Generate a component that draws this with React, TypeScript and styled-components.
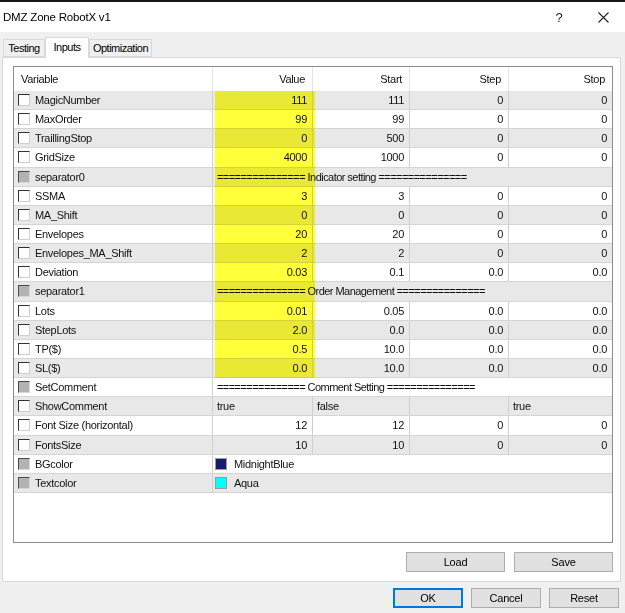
import React from "react";
import styled, { createGlobalStyle } from "styled-components";

const GlobalStyle = createGlobalStyle`
  html, body { margin: 0; padding: 0; background: #f0f0f0; }
  body { font-family: "Liberation Sans", Arial, sans-serif; }
  * { box-sizing: border-box; }
`;

const ROW_H = 19.15;
const COLS = "199px 100px 97px 99px 1fr";

type Param =
  | { kind: "num"; name: string; value: string; start: string; step: string; stop: string }
  | { kind: "sep"; name: string; text: string }
  | { kind: "bool"; name: string; value: string; start: string; step: string; stop: string }
  | { kind: "color"; name: string; color: string; label: string };

const params: Param[] = [
  { kind: "num", name: "MagicNumber", value: "111", start: "111", step: "0", stop: "0" },
  { kind: "num", name: "MaxOrder", value: "99", start: "99", step: "0", stop: "0" },
  { kind: "num", name: "TraillingStop", value: "0", start: "500", step: "0", stop: "0" },
  { kind: "num", name: "GridSize", value: "4000", start: "1000", step: "0", stop: "0" },
  { kind: "sep", name: "separator0", text: "=============== Indicator setting ===============" },
  { kind: "num", name: "SSMA", value: "3", start: "3", step: "0", stop: "0" },
  { kind: "num", name: "MA_Shift", value: "0", start: "0", step: "0", stop: "0" },
  { kind: "num", name: "Envelopes", value: "20", start: "20", step: "0", stop: "0" },
  { kind: "num", name: "Envelopes_MA_Shift", value: "2", start: "2", step: "0", stop: "0" },
  { kind: "num", name: "Deviation", value: "0.03", start: "0.1", step: "0.0", stop: "0.0" },
  { kind: "sep", name: "separator1", text: "=============== Order Management ===============" },
  { kind: "num", name: "Lots", value: "0.01", start: "0.05", step: "0.0", stop: "0.0" },
  { kind: "num", name: "StepLots", value: "2.0", start: "0.0", step: "0.0", stop: "0.0" },
  { kind: "num", name: "TP($)", value: "0.5", start: "10.0", step: "0.0", stop: "0.0" },
  { kind: "num", name: "SL($)", value: "0.0", start: "10.0", step: "0.0", stop: "0.0" },
  { kind: "sep", name: "SetComment", text: "=============== Comment Setting ===============" },
  { kind: "bool", name: "ShowComment", value: "true", start: "false", step: "", stop: "true" },
  { kind: "num", name: "Font Size (horizontal)", value: "12", start: "12", step: "0", stop: "0" },
  { kind: "num", name: "FontsSize", value: "10", start: "10", step: "0", stop: "0" },
  { kind: "color", name: "BGcolor", color: "#191970", label: "MidnightBlue" },
  { kind: "color", name: "Textcolor", color: "#00ffff", label: "Aqua" },
];

const Window = styled.div`
  width: 625px;
  height: 613px;
  display: flex;
  flex-direction: column;
  background: #f0f0f0;
  font-size: 11px;
  letter-spacing: -0.3px;
  color: #111;
  overflow: hidden;
`;

const DesktopEdge = styled.div`
  height: 2px;
  background: #161616;
  flex: none;
`;

const TitleBar = styled.div`
  height: 30px;
  flex: none;
  background: #ffffff;
  display: flex;
  align-items: center;
  padding-left: 3px;
`;

const Title = styled.div`
  flex: 1;
  font-size: 11.5px;
  letter-spacing: -0.2px;
  color: #000;
`;

const HelpGlyph = styled.div`
  width: 44px;
  text-align: center;
  font-size: 13px;
  color: #222;
`;

const CloseButton = styled.div`
  width: 44px;
  display: flex;
  justify-content: center;
  align-items: center;
`;

const TabStrip = styled.div`
  flex: none;
  display: flex;
  align-items: flex-end;
  padding: 5px 0 0 3px;
  height: 25px;
`;

const Tab = styled.div<{ $active?: boolean; $w: number }>`
  width: ${(p) => p.$w}px;
  height: ${(p) => (p.$active ? 21 : 18)}px;
  margin-bottom: ${(p) => (p.$active ? -1 : 0)}px;
  background: ${(p) => (p.$active ? "#ffffff" : "#f0f0f0")};
  border: 1px solid #d9d9d9;
  border-bottom: ${(p) => (p.$active ? "none" : "1px solid #d9d9d9")};
  display: flex;
  align-items: center;
  justify-content: center;
  padding-bottom: ${(p) => (p.$active ? 3 : 0)}px;
  position: relative;
  z-index: ${(p) => (p.$active ? 2 : 1)};
  letter-spacing: -0.5px;
  white-space: nowrap;
  color: #000;
`;

const Panel = styled.div`
  height: 525px;
  flex: none;
  margin: 0 4px 0 2px;
  background: #ffffff;
  border: 1px solid #d9d9d9;
  padding: 8px 7px 9px 10px;
  display: flex;
  flex-direction: column;
`;

const Table = styled.div`
  height: 477px;
  border: 1px solid #8c8c8c;
  background: #ffffff;
  display: flex;
  flex-direction: column;
`;

const HeaderRow = styled.div`
  display: grid;
  grid-template-columns: ${COLS};
  height: 24px;
  flex: none;
`;

const HeaderCell = styled.div<{ $left?: boolean }>`
  display: flex;
  align-items: center;
  justify-content: ${(p) => (p.$left ? "flex-start" : "flex-end")};
  padding: 0 7px 1px 7px;
  border-right: 1px solid #e5e5e5;
  color: #111;
  &:last-child { border-right: none; }
`;

const Body = styled.div`
  position: relative;
  flex: 1;
`;

const Row = styled.div<{ $alt: boolean }>`
  display: grid;
  grid-template-columns: ${COLS};
  height: ${ROW_H}px;
  background: ${(p) => (p.$alt ? "#e8e8e8" : "#ffffff")};
  border-bottom: 1px solid #d5d5d5;
`;

const NameCell = styled.div`
  display: flex;
  align-items: center;
  gap: 5px;
  padding-left: 4px;
  border-right: 1px solid #d0d0d0;
  white-space: nowrap;
`;

const Check = styled.span<{ $disabled?: boolean }>`
  width: 12px;
  height: 12px;
  flex: none;
  border: 1px solid;
  border-color: ${(p) =>
    p.$disabled ? "#4a4a4a #d8d8d8 #d8d8d8 #4a4a4a" : "#333333 #cfcfcf #cfcfcf #333333"};
  background: ${(p) => (p.$disabled ? "#b3b3b3" : "#ffffff")};
`;

const Cell = styled.div<{ $left?: boolean; $span?: number }>`
  display: flex;
  align-items: center;
  justify-content: ${(p) => (p.$left ? "flex-start" : "flex-end")};
  padding: 0 5px 0 ${(p) => (p.$left ? 4 : 5)}px;
  border-right: 1px solid #d0d0d0;
  white-space: nowrap;
  overflow: hidden;
  grid-column: ${(p) => (p.$span ? `span ${p.$span}` : "auto")};
  &:last-child { border-right: none; }
`;

const SeparatorCell = styled(Cell)`
  letter-spacing: -0.55px;
`;

const ColorCell = styled(Cell)`
  gap: 7px;
  padding-left: 2px;
`;

const Swatch = styled.span<{ $color: string }>`
  width: 12px;
  height: 12px;
  flex: none;
  background: ${(p) => p.$color};
  border: 1px solid #9a9a9a;
`;

const Highlight = styled.div`
  position: absolute;
  left: 201px;
  top: 0;
  width: 100px;
  background: #ffff3a;
  mix-blend-mode: multiply;
  pointer-events: none;
`;

const PanelButtons = styled.div`
  display: flex;
  justify-content: flex-end;
  gap: 9px;
  margin-top: 9px;
`;

const Button = styled.button<{ $w: number; $default?: boolean }>`
  width: ${(p) => p.$w}px;
  height: 20px;
  padding: 0;
  background: #e1e1e1;
  border: 1px solid ${(p) => (p.$default ? "#0078d7" : "#adadad")};
  box-shadow: ${(p) => (p.$default ? "inset 0 0 0 1px #0078d7" : "none")};
  font-family: "Liberation Sans", Arial, sans-serif;
  font-size: 11px;
  letter-spacing: -0.2px;
  color: #000;
`;

const DialogButtons = styled.div`
  display: flex;
  justify-content: flex-end;
  gap: 8px;
  padding: 6px 6px 0 0;
`;

function CloseIcon() {
  return (
    <svg width="11" height="11" viewBox="0 0 11 11">
      <path d="M0.5 0.5 L10.5 10.5 M10.5 0.5 L0.5 10.5" stroke="#222" strokeWidth="1.1" fill="none" />
    </svg>
  );
}

function ParamRow({ p, alt }: { p: Param; alt: boolean }) {
  const disabled = p.kind === "sep" || p.kind === "color";
  return (
    <Row $alt={alt}>
      <NameCell>
        <Check $disabled={disabled} />
        {p.name}
      </NameCell>
      {p.kind === "num" && (
        <>
          <Cell>{p.value}</Cell>
          <Cell>{p.start}</Cell>
          <Cell>{p.step}</Cell>
          <Cell>{p.stop}</Cell>
        </>
      )}
      {p.kind === "bool" && (
        <>
          <Cell $left>{p.value}</Cell>
          <Cell $left>{p.start}</Cell>
          <Cell $left>{p.step}</Cell>
          <Cell $left>{p.stop}</Cell>
        </>
      )}
      {p.kind === "sep" && (
        <SeparatorCell $left $span={4}>
          {p.text}
        </SeparatorCell>
      )}
      {p.kind === "color" && (
        <ColorCell $left $span={4}>
          <Swatch $color={p.color} />
          {p.label}
        </ColorCell>
      )}
    </Row>
  );
}

export default function App() {
  const highlightRows = 15;
  return (
    <>
      <GlobalStyle />
      <Window>
        <DesktopEdge />
        <TitleBar>
          <Title>DMZ Zone RobotX v1</Title>
          <HelpGlyph>?</HelpGlyph>
          <CloseButton>
            <CloseIcon />
          </CloseButton>
        </TitleBar>
        <TabStrip>
          <Tab $w={42}>Testing</Tab>
          <Tab $w={44} $active>
            Inputs
          </Tab>
          <Tab $w={63}>Optimization</Tab>
        </TabStrip>
        <Panel>
          <Table>
            <HeaderRow>
              <HeaderCell $left>Variable</HeaderCell>
              <HeaderCell>Value</HeaderCell>
              <HeaderCell>Start</HeaderCell>
              <HeaderCell>Step</HeaderCell>
              <HeaderCell>Stop</HeaderCell>
            </HeaderRow>
            <Body>
              {params.map((p, i) => (
                <ParamRow key={p.name} p={p} alt={i % 2 === 0} />
              ))}
              <Highlight style={{ height: `${highlightRows * ROW_H}px` }} />
            </Body>
          </Table>
          <PanelButtons>
            <Button $w={99}>Load</Button>
            <Button $w={99}>Save</Button>
          </PanelButtons>
        </Panel>
        <DialogButtons>
          <Button $w={70} $default>
            OK
          </Button>
          <Button $w={70}>Cancel</Button>
          <Button $w={70}>Reset</Button>
        </DialogButtons>
      </Window>
    </>
  );
}
